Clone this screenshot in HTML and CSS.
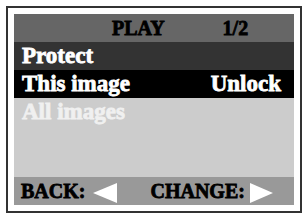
FILE: index.html
```html
<!doctype html>
<html lang="en">
  <head>
    <meta charset="UTF-8" />
    <title>Play - Protect</title>
    <link rel="stylesheet" href="styles.css">
  </head>
  <body>
    <div class="frame">
      <div class="screen">
        <div class="header">
          <span class="title">PLAY</span>
          <span class="page">1/2</span>
        </div>
        <div class="row menu-title">Protect</div>
        <div class="row selected">
          <span>This image</span>
          <span>Unlock</span>
        </div>
        <div class="list">
          <div class="row disabled">All images</div>
        </div>
        <div class="footer">
          <span class="hint">BACK: <span class="arrow left"></span></span>
          <span class="hint">CHANGE: <span class="arrow right"></span></span>
        </div>
      </div>
    </div>
  </body>
</html>
```

FILE: styles.css
```css
body {
  margin: 0;
  background: #fff;
  font-family: "Liberation Serif", "Times New Roman", serif;
  font-weight: bold;
}
.frame {
  margin: 6px;
  width: 280px;
  height: 191px;
  padding: 6px;
  border: 2px solid #333;
}
.screen {
  display: flex;
  flex-direction: column;
  height: 100%;
  background: #ccc;
}
.header {
  display: flex;
  align-items: center;
  height: 28px;
  padding-left: 98px;
  background: #666;
  color: #000;
  font-size: 20px;
  -webkit-text-stroke: 0.8px #000;
}
.header .page {
  margin-left: 58px;
}
.row {
  display: flex;
  justify-content: space-between;
  align-items: center;
  height: 28px;
  padding: 0 13px 0 8px;
  font-size: 23px;
  color: #fff;
  -webkit-text-stroke: 0.8px currentColor;
}
.menu-title {
  background: #333;
}
.selected {
  background: #000;
}
.list {
  flex: 1;
}
.disabled {
  color: #f0f0f0;
}
.footer {
  display: flex;
  align-items: center;
  height: 28px;
  padding-left: 7px;
  background: #999;
  color: #000;
  font-size: 20px;
  -webkit-text-stroke: 0.8px #000;
}
.hint {
  display: flex;
  align-items: center;
}
.hint + .hint {
  margin-left: 33px;
}
.arrow {
  display: inline-block;
  width: 0;
  height: 0;
  margin-left: 8px;
  margin-top: 4px;
  border-top: 10px solid transparent;
  border-bottom: 10px solid transparent;
}
.arrow.left {
  border-right: 24px solid #fff;
}
.arrow.right {
  margin-left: 5px;
  border-left: 23px solid #fff;
}
```
